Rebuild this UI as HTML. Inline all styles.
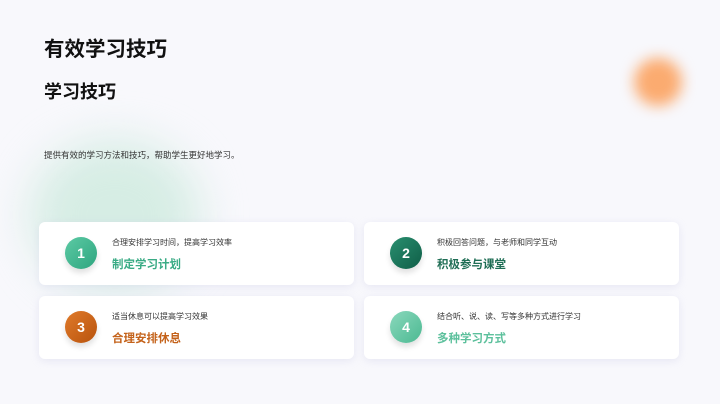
<!DOCTYPE html>
<html><head><meta charset="utf-8"><style>
*{margin:0;padding:0;box-sizing:border-box}
body{width:720px;height:404px;overflow:hidden;background:#f8f8fc;font-family:"Liberation Sans","Noto Sans CJK SC",sans-serif;position:relative}
.blob{position:absolute;border-radius:50%}
.t1{position:absolute;left:44px;top:32px;font-size:20.5px;font-weight:bold;color:#111}
.t2{position:absolute;left:44px;top:78px;font-size:18px;font-weight:bold;color:#111}
.d{position:absolute;left:44px;top:149px;font-size:8.5px;color:#333}
.card{position:absolute;width:315px;height:63px;background:#fff;border-radius:6px;box-shadow:0 2px 8px rgba(200,200,230,.35)}
.c{position:absolute;left:26px;top:15px;width:32px;height:32px;border-radius:50%;color:#fff;font-weight:bold;font-size:14px;text-align:center;line-height:32px;box-shadow:0 4px 6px rgba(0,0,0,.12)}
.s{position:absolute;left:73px;top:15px;font-size:8px;color:#333}
.h{position:absolute;left:73px;top:34px;font-size:11.5px;font-weight:bold}
</style></head><body>
<div class="blob" style="left:634px;top:58px;width:48px;height:48px;background:#fbab70;filter:blur(7px)"></div>
<div class="blob" style="left:30px;top:140px;width:170px;height:150px;background:rgba(200,232,218,.7);filter:blur(22px)"></div>
<div class="t1">有效学习技巧</div>
<div class="t2">学习技巧</div>
<div class="d">提供有效的学习方法和技巧，帮助学生更好地学习。</div>
<div class="card" style="left:39px;top:222px"><div class="c" style="background:linear-gradient(135deg,#5ccaa4,#2ea57f)">1</div><div class="s">合理安排学习时间，提高学习效率</div><div class="h" style="color:#3aab85">制定学习计划</div></div>
<div class="card" style="left:364px;top:222px"><div class="c" style="background:linear-gradient(135deg,#2a8f70,#0f5e47)">2</div><div class="s">积极回答问题，与老师和同学互动</div><div class="h" style="color:#1f6e55">积极参与课堂</div></div>
<div class="card" style="left:39px;top:296px"><div class="c" style="background:linear-gradient(135deg,#e07a2a,#b8530d)">3</div><div class="s">适当休息可以提高学习效果</div><div class="h" style="color:#c4621a">合理安排休息</div></div>
<div class="card" style="left:364px;top:296px"><div class="c" style="background:linear-gradient(135deg,#8ad8bc,#4cb992)">4</div><div class="s">结合听、说、读、写等多种方式进行学习</div><div class="h" style="color:#5cc09c">多种学习方式</div></div>
</body></html>
